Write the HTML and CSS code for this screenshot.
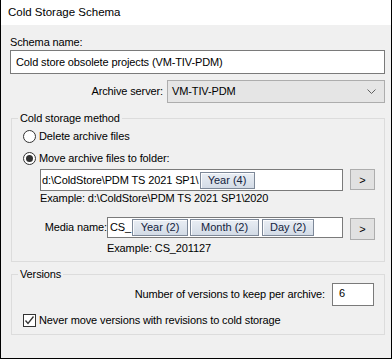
FILE: index.html
```html
<!DOCTYPE html>
<html>
<head>
<meta charset="utf-8">
<link rel="stylesheet" href="styles.css">
</head>
<body>
<div class="window">
  <div class="titlebar">Cold Storage Schema</div>
  <div class="content">
    <div class="label">Schema name:</div>
    <div class="textbox schema">Cold store obsolete projects (VM-TIV-PDM)</div>
    <div class="server-row">
      <span class="label">Archive server:</span>
      <div class="combo">
        <span>VM-TIV-PDM</span>
        <svg class="chev" width="9" height="5" viewBox="0 0 9 5"><path d="M0.5 0.5 L4.5 4.5 L8.5 0.5" fill="none" stroke="#606060" stroke-width="1"/></svg>
      </div>
    </div>
    <fieldset class="group method">
      <legend>Cold storage method</legend>
      <div class="group-body">
        <div class="option first"><span class="radio"></span><span>Delete archive files</span></div>
        <div class="option second"><span class="radio checked"></span><span>Move archive files to folder:</span></div>
        <div class="token-row folder-row">
          <div class="tokenbox folder">d:\ColdStore\PDM TS 2021 SP1\<span class="token year4">Year (4)</span></div>
          <button class="browse">&gt;</button>
        </div>
        <div class="example folder-ex">Example: d:\ColdStore\PDM TS 2021 SP1\2020</div>
        <div class="token-row media-row">
          <span class="media-label">Media name:</span>
          <div class="tokenbox media">CS_<span class="token y2">Year (2)</span><span class="token m2">Month (2)</span><span class="token d2">Day (2)</span></div>
          <button class="browse media-btn">&gt;</button>
        </div>
        <div class="example media-ex">Example: CS_201127</div>
      </div>
    </fieldset>
    <fieldset class="group versions">
      <legend>Versions</legend>
      <div class="group-body">
        <div class="keep-row">
          <span>Number of versions to keep per archive:</span>
          <div class="textbox num">6</div>
        </div>
        <div class="option check-row">
          <span class="checkbox"><svg width="11" height="11" viewBox="0 0 11 11"><path d="M1.5 5.5 L4 8.5 L9.5 1.5" fill="none" stroke="#333" stroke-width="1.3"/></svg></span>
          <span>Never move versions with revisions to cold storage</span>
        </div>
      </div>
    </fieldset>
  </div>
</div>
</body>
</html>
```
FILE: styles.css
```css
* { box-sizing: border-box; }
html, body { margin: 0; padding: 0; background: #f0f0f0; }
body { font-family: "Liberation Sans", Arial, sans-serif; font-size: 11px; line-height: 13px; color: #000; letter-spacing: -0.12px; }

.window {
  width: 392px;
  height: 359px;
  background: #f0f0f0;
  border-left: 1px solid #000;
  border-right: 1px solid #000;
  border-bottom: 1px solid #000;
  display: flex;
  flex-direction: column;
}
.titlebar {
  height: 25px;
  background: #fff;
  padding: 6px 0 0 7px;
  font-size: 11.5px;
  line-height: 13px;
  letter-spacing: 0;
  color: #000;
}
.content {
  padding: 11px 0 0 9px;
}
.label { height: 13px; }

.textbox {
  background: #fff;
  border: 1px solid #7a7a7a;
}
.schema {
  margin-top: 1px;
  width: 375px;
  height: 24px;
  padding: 5px 0 0 5px;
}
.server-row {
  margin-top: 6px;
  width: 375px;
  display: flex;
  justify-content: flex-end;
  align-items: center;
  gap: 4px;
}
.combo {
  width: 218px;
  height: 23px;
  background: #e5e5e5;
  border: 1px solid #adadad;
  display: flex;
  align-items: center;
  justify-content: space-between;
  padding: 0 8px 0 4px;
}

.group {
  margin: 9px 0 0 1px;
  padding: 0;
  width: 374px;
  border: 1px solid #dcdcdc;
  min-inline-size: 0;
}
.group legend {
  margin-left: 6px;
  padding: 0 2px;
  line-height: 13px;
  height: 13px;
}
.group-body { padding: 0 0 6px 11px; }

.option { display: flex; align-items: center; gap: 3px; height: 13px; }
.option.first { margin-top: 5px; }
.option.second { margin-top: 9px; }
.radio {
  width: 13px; height: 13px;
  border: 1px solid #333;
  border-radius: 50%;
  background: #fff;
  display: flex; align-items: center; justify-content: center;
  flex: none;
}
.radio.checked::after {
  content: "";
  width: 7px; height: 7px;
  border-radius: 50%;
  background: #333;
}

.token-row { display: flex; align-items: flex-start; }
.folder-row { margin: 4px 0 0 17px; }
.tokenbox {
  background: #fff;
  border: 1px solid #7a7a7a;
  display: flex;
  align-items: center;
  padding-left: 1px;
  white-space: nowrap;
}
.folder { width: 303px; height: 22px; }
.token {
  height: 17px;
  display: inline-flex;
  align-items: center;
  justify-content: center;
  background: linear-gradient(#e9eef4, #d3dbe6);
  border: 1px solid #7d8898;
  box-shadow: inset 1px 1px 0 #fbfcfe;
  color: #14233d;
  margin-left: 1px;
  letter-spacing: 0;
}
.year4 { width: 55px; }
.y2 { width: 56px; margin-left: 1px; }
.m2 { width: 69px; margin-left: 2px; }
.d2 { width: 52px; margin-left: 3px; }

.browse {
  margin: 0 0 0 7px;
  width: 25px;
  height: 21px;
  background: #e1e1e1;
  border: 1px solid #adadad;
  font-family: "Liberation Sans", Arial, sans-serif;
  font-size: 11px;
  color: #000;
  padding: 0;
}
.example { height: 13px; }
.folder-ex { margin: 1px 0 0 17px; }
.media-row { margin: 12px 0 0 0; padding-left: 20px; }
.media-label { width: 64px; text-align: right; margin-top: 4px; }
.media { width: 236px; height: 21px; margin-left: 0; padding-left: 2px; }
.media-btn { margin-top: 1px; height: 22px; }
.media-ex { margin: 2px 0 0 84px; }

.versions { margin-top: 6px; }
.versions .group-body { padding-bottom: 7px; }
.keep-row {
  margin-top: 2px;
  padding-right: 10px;
  display: flex;
  justify-content: flex-end;
  align-items: center;
  gap: 7px;
}
.num { width: 42px; height: 23px; padding: 3px 0 0 6px; }
.check-row { margin-top: 8px; }
.checkbox {
  width: 13px; height: 13px;
  border: 1px solid #333;
  background: #fff;
  display: flex; align-items: center; justify-content: center;
  flex: none;
}
```
